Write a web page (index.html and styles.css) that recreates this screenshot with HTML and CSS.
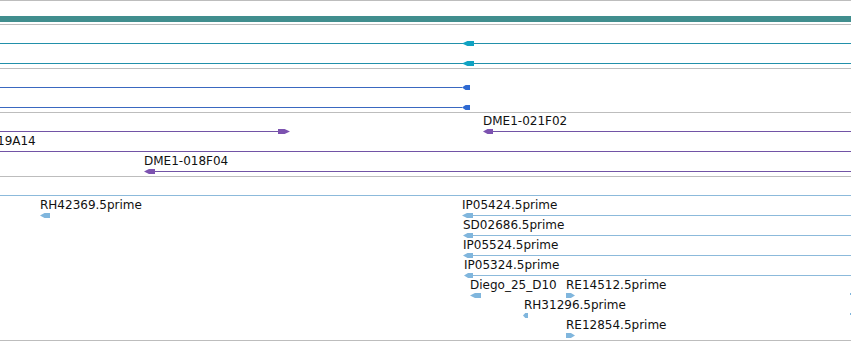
FILE: index.html
```html
<!DOCTYPE html>
<html lang="en">
<head>
    <meta charset="UTF-8">
    <title>Tracks</title>
    <link rel="stylesheet" href="styles.css">
</head>
<body>
    <div class="panel" id="panel"></div>
    <script>
        // each track: list of rows, each row: list of glyphs
        // bar/line: [x1, x2]  box: [x1, x2, dir]  label: [text, x]  mark: x
        let tracks = [
            { cls: 't-gene', rows: [
                [{ bar: [0, 851] }]
            ]},
            { cls: 't-cdna', rows: [
                [{ line: [0, 851] }, { box: [462, 474, 'l'] }],
                [{ line: [0, 851] }, { box: [462, 474, 'l'] }]
            ]},
            { cls: 't-blue', rows: [
                [{ line: [0, 462] }, { box: [462, 470, 'l'] }],
                [{ line: [0, 462] }, { box: [462, 470, 'l'] }]
            ]},
            { cls: 't-bac', rows: [
                [{ line: [0, 278] }, { box: [278, 290, 'r'] },
                 { label: ['DME1-021F02', 483] }, { box: [483, 493, 'l'] }, { line: [493, 851] }],
                [{ label: ['19A14', -3] }, { line: [0, 851] }],
                [{ label: ['DME1-018F04', 144] }, { box: [144, 155, 'l'] }, { line: [155, 851] }]
            ]},
            { cls: 't-est', rows: [
                [{ line: [0, 851] }],
                [{ label: ['RH42369.5prime', 40] }, { box: [40, 50, 'l'] },
                 { label: ['IP05424.5prime', 462] }, { box: [462, 473, 'l'] }, { line: [473, 851] }],
                [{ label: ['SD02686.5prime', 463] }, { box: [463, 473, 'l'] }, { line: [473, 851] }],
                [{ label: ['IP05524.5prime', 463] }, { box: [463, 473, 'l'] }, { line: [473, 851] }],
                [{ label: ['IP05324.5prime', 464] }, { box: [464, 473, 'l'] }, { line: [473, 851] }],
                [{ label: ['Diego_25_D10', 470] }, { box: [470, 481, 'l'] },
                 { label: ['RE14512.5prime', 566] }, { box: [566, 575, 'r'] }, { mark: 850 }],
                [{ label: ['RH31296.5prime', 524] }, { box: [523, 528, 'l'] }, { mark: 850 }],
                [{ label: ['RE12854.5prime', 566] }, { box: [566, 575, 'r'] }]
            ]}
        ];

        function span(cls, x1, x2){
            let el = document.createElement('div');
            el.className = cls;
            el.style.left = x1 + 'px';
            if(x2 !== undefined)
                el.style.width = (x2 - x1) + 'px';
            return el;
        }

        let panel = document.querySelector('#panel');
        tracks.forEach(t => {
            let track = document.createElement('div');
            track.className = 'track ' + t.cls;
            t.rows.forEach(r => {
                let row = document.createElement('div');
                row.className = 'row';
                r.forEach(g => {
                    if(g.bar) row.appendChild(span('bar', g.bar[0], g.bar[1]));
                    if(g.line) row.appendChild(span('line', g.line[0], g.line[1]));
                    if(g.box) row.appendChild(span('box ' + g.box[2], g.box[0], g.box[1]));
                    if(g.mark !== undefined) row.appendChild(span('mark', g.mark, g.mark + 1));
                    if(g.label){
                        let lb = span('label', g.label[1]);
                        lb.textContent = g.label[0];
                        row.appendChild(lb);
                    }
                });
                track.appendChild(row);
            });
            panel.appendChild(track);
        });
    </script>
</body>
</html>
```

FILE: styles.css
```css
*{
    margin: 0;
    padding: 0;
    box-sizing: border-box;
}
body{
    width: 851px;
    height: 341px;
    overflow: hidden;
    background-color: white;
    font-family: "DejaVu Sans", "Liberation Sans", sans-serif;
    font-size: 12px;
    color: #111;
}
.panel{
    width: 851px;
}
.track{
    border-top: 1px solid #bdbdbd;
    padding-top: 3px;
}
.track:last-child{
    border-bottom: 1px solid #bdbdbd;
}
.row{
    position: relative;
    height: 20px;
}
.bar{
    position: absolute;
    top: 12px;
    height: 6px;
}
.line{
    position: absolute;
    top: 15px;
    height: 1px;
}
.box{
    position: absolute;
    top: 13px;
    height: 5px;
}
.box.l{
    clip-path: polygon(0 50%, 45% 0, 100% 0, 100% 100%, 45% 100%);
}
.box.r{
    clip-path: polygon(0 0, 55% 0, 100% 50%, 55% 100%, 0 100%);
}
.mark{
    position: absolute;
    top: 13px;
    height: 2px;
}
.label{
    position: absolute;
    top: -2px;
    line-height: 14px;
    white-space: nowrap;
}

.t-gene .bar{
    background-color: #418e8e;
}
.t-cdna .line{
    background-color: #2290aa;
}
.t-cdna .box{
    background-color: #10a2c2;
}
.t-blue .line{
    background-color: #3a68c0;
}
.t-blue .box{
    background-color: #2f6ad2;
}
.t-bac .line{
    background-color: #7254a6;
}
.t-bac .box{
    background-color: #7c52b0;
}
.t-est .line{
    background-color: #8cbadb;
}
.t-est .box,
.t-est .mark{
    background-color: #80b6dd;
}
```
